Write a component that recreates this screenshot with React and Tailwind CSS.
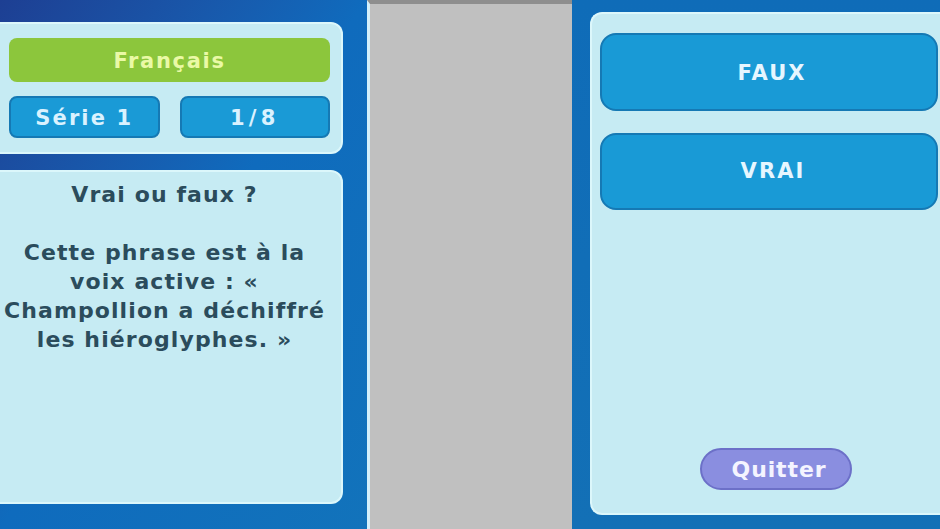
import React from 'react';

const font = { fontFamily: '"DejaVu Sans", Verdana, sans-serif' };

function Pill({ children, className }) {
  return (
    <div
      className={`flex items-center justify-center font-bold border-2 border-[#1579b4] ${className}`}
      style={font}
    >
      {children}
    </div>
  );
}

export default function App() {
  return (
    <div className="flex w-[940px] h-[529px] overflow-hidden" style={font}>
      {/* Left screen */}
      <div className="w-[367px] h-full flex flex-col bg-gradient-to-br from-[#1d3f93] via-[#0f6bbd] to-[#1273bb] pr-[24px]">
        <div className="mt-[22px] h-[132px] rounded-r-xl bg-[#c6ebf3] border-2 border-[#dcf7fb] border-l-0 flex flex-col gap-[14px] pl-[9px] pr-[11px] pt-[14px]">
          <div className="h-[44px] pt-[4px] rounded-lg bg-[#8cc63c] flex items-center justify-center text-[21px] tracking-[0.08em] font-bold text-[#eaf9a6]">
            Français
          </div>
          <div className="flex gap-[20px]">
            <Pill className="flex-1 h-[42px] pt-[3px] rounded-lg bg-[#1a9ad6] text-[21px] tracking-[0.1em] text-[#daf2ff]">Série 1</Pill>
            <Pill className="flex-1 h-[42px] pt-[3px] rounded-lg bg-[#1a9ad6] text-[21px] tracking-[0.2em] text-[#daf2ff]">1/8</Pill>
          </div>
        </div>
        <div className="mt-[16px] h-[334px] rounded-r-xl bg-[#c6ebf3] border-2 border-[#dcf7fb] border-l-0 pt-[8px] text-center text-[22px] tracking-[0.05em] font-bold leading-[29px] text-[#2b4c5c] -ml-[8px] pr-[4px]">
          <p>Vrai ou faux ?</p>
          <p className="mt-[29px] whitespace-nowrap">
            Cette phrase est à la
            <br />
            voix active : «
            <br />
            Champollion a déchiffré
            <br />
            les hiéroglyphes. »
          </p>
        </div>
      </div>

      {/* Middle gap */}
      <div className="w-[205px] h-full bg-[#c0c0c0] border-l-[3px] border-[#d4f0fb] border-t-[4px] border-t-[#8e8e8e]" />

      {/* Right screen */}
      <div className="flex-1 h-full bg-gradient-to-b from-[#0f6cb8] to-[#1370b6] pl-[18px] pt-[12px] pb-[14px] flex">
        <div className="flex-1 rounded-l-xl bg-[#c6ebf3] border-2 border-r-0 border-[#dcf7fb] flex flex-col pl-[8px] pr-[2px] pt-[19px]">
          <Pill className="h-[78px] pt-[3px] pl-[6px] rounded-2xl bg-[#199ad6] text-[21px] text-[#e6f6ff] tracking-[0.1em]">FAUX</Pill>
          <Pill className="mt-[22px] h-[77px] pl-[8px] rounded-2xl bg-[#199ad6] text-[21px] text-[#e6f6ff] tracking-[0.1em]">VRAI</Pill>
          <div className="flex-1" />
          <div className="ml-[100px] mb-[23px] w-[152px] h-[42px] pl-[6px] rounded-full bg-[#8a8ee0] border-2 border-[#6c70c8] flex items-center justify-center text-[22px] tracking-[0.04em] font-bold text-[#f4f4ff]">
            Quitter
          </div>
        </div>
      </div>
    </div>
  );
}
